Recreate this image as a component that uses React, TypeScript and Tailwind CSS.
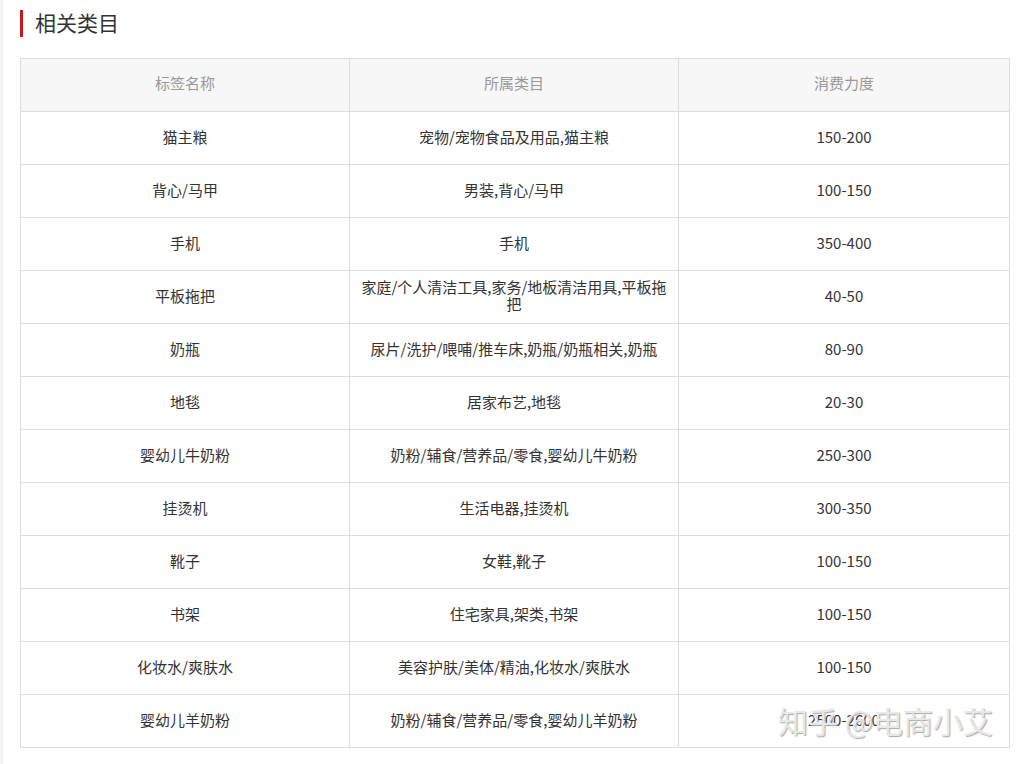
import React from 'react';

type Row = { name: string; category: string; spend: string };

const rows: Row[] = [
  { name: '猫主粮', category: '宠物/宠物食品及用品,猫主粮', spend: '150-200' },
  { name: '背心/马甲', category: '男装,背心/马甲', spend: '100-150' },
  { name: '手机', category: '手机', spend: '350-400' },
  { name: '平板拖把', category: '家庭/个人清洁工具,家务/地板清洁用具,平板拖把', spend: '40-50' },
  { name: '奶瓶', category: '尿片/洗护/喂哺/推车床,奶瓶/奶瓶相关,奶瓶', spend: '80-90' },
  { name: '地毯', category: '居家布艺,地毯', spend: '20-30' },
  { name: '婴幼儿牛奶粉', category: '奶粉/辅食/营养品/零食,婴幼儿牛奶粉', spend: '250-300' },
  { name: '挂烫机', category: '生活电器,挂烫机', spend: '300-350' },
  { name: '靴子', category: '女鞋,靴子', spend: '100-150' },
  { name: '书架', category: '住宅家具,架类,书架', spend: '100-150' },
  { name: '化妆水/爽肤水', category: '美容护肤/美体/精油,化妆水/爽肤水', spend: '100-150' },
  { name: '婴幼儿羊奶粉', category: '奶粉/辅食/营养品/零食,婴幼儿羊奶粉', spend: '2500-2600' },
];

const App: React.FC = () => {
  return (
    <div
      className="relative flex min-h-[764px] w-[1025px] bg-white text-[#333]"
      style={{ fontFamily: '"Noto Sans CJK SC", "Noto Sans", sans-serif' }}
    >
      <div className="w-[3px] shrink-0 bg-[#f3f3f3]" />
      <div className="flex-1 pl-[17px] pt-[10px]">
        {/* section title */}
        <div className="flex items-start gap-[12px]">
          <span className="h-[27px] w-[3px] bg-[#c9161d]" />
          <h2 className="text-[21px] leading-[25px] text-[#333]">相关类目</h2>
        </div>

        <table className="mt-[21px] w-[990px] table-fixed border-collapse text-center text-[15px]">
          <colgroup>
            <col className="w-[329px]" />
            <col className="w-[329px]" />
            <col />
          </colgroup>
          <thead>
            <tr className="h-[53px] bg-[#f7f7f7] text-[#999]">
              <th className="border border-[#ddd] pb-[4px] font-normal">标签名称</th>
              <th className="border border-[#ddd] pb-[4px] font-normal">所属类目</th>
              <th className="border border-[#ddd] pb-[4px] font-normal">消费力度</th>
            </tr>
          </thead>
          <tbody>
            {rows.map((row) => (
              <tr key={row.name} className="h-[53px]">
                <td className="border border-[#ddd] px-[8px] pb-[4px] leading-[17px]">{row.name}</td>
                <td className="border border-[#ddd] px-[8px] pb-[4px] leading-[17px]">{row.category}</td>
                <td className="border border-[#ddd] px-[8px] pb-[4px] leading-[17px]">{row.spend}</td>
              </tr>
            ))}
          </tbody>
        </table>
      </div>

      {/* watermark */}
      <div
        className="absolute left-[778px] top-[700px] text-[30px] leading-[40px] text-[#e8e8e8]"
        style={{ textShadow: '1px 1px 1px #aaa' }}
      >
        知乎 @电商小艾
      </div>
    </div>
  );
};

export default App;
